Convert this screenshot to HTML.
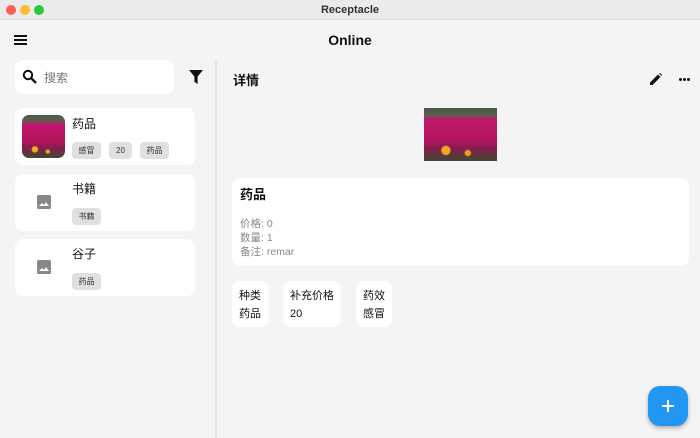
<!DOCTYPE html>
<html><head><meta charset="utf-8"><style>
*{margin:0;padding:0;box-sizing:border-box}
body{width:700px;height:438px;overflow:hidden;background:#f4f4f4;font-family:"Liberation Sans","Noto Sans CJK SC",sans-serif;color:#111;position:relative}
.abs{position:absolute}
.tb{left:0;top:0;width:700px;height:20px;background:#ebebeb;border-bottom:1px solid #dcdcdc;text-align:center;font-size:11px;font-weight:bold;line-height:20px;color:#333}
.dot{top:5px;width:10px;height:10px;border-radius:50%}
.card{background:#fff;border-radius:8px}
.chip{position:absolute;top:34px;height:17px;background:#e0e0e0;border-radius:4px;font-size:8px;line-height:17px;text-align:center;color:#333}
.flower{background:radial-gradient(circle at 30% 80%,#f5a623 0 6%,transparent 8%),radial-gradient(circle at 60% 85%,#e8a020 0 4%,transparent 6%),linear-gradient(180deg,#4a5a4a 0%,#55604a 12%,#c0186e 22%,#b5145f 60%,#8a1a50 75%,#3d4a30 100%)}
</style></head><body>
<div class="abs tb">Receptacle</div>
<div class="abs dot" style="left:6px;background:#fe5f57"></div>
<div class="abs dot" style="left:20px;background:#febc2e"></div>
<div class="abs dot" style="left:34px;background:#28c840"></div>
<div class="abs" style="left:14px;top:35px;width:13px;height:2px;background:#111;box-shadow:0 4px 0 #111,0 8px 0 #111"></div>
<div class="abs" style="left:0;width:700px;top:32px;text-align:center;font-size:14px;font-weight:bold">Online</div>
<div class="abs" style="left:215px;top:60px;width:2px;height:378px;background:#e4e4e4"></div>
<div class="abs card" style="left:15px;top:60px;width:159px;height:34px">
<svg class="abs" style="left:7px;top:9px" width="16" height="16" viewBox="0 0 16 16"><circle cx="6" cy="6" r="4.2" fill="none" stroke="#111" stroke-width="2"/><path d="M9 9l5 5" stroke="#111" stroke-width="2.4"/></svg>
<div class="abs" style="left:29px;top:9px;font-size:12px;color:#777">搜索</div></div>
<svg class="abs" style="left:189px;top:70px" width="14" height="14" viewBox="0 0 13 13"><path d="M0 0h13L8 6v7L5 11V6z" fill="#111"/></svg>
<div class="abs card" style="left:15px;top:108px;width:180px;height:57px">
<div class="abs flower" style="left:7px;top:7px;width:43px;height:43px;border-radius:7px"></div>
<div class="abs" style="left:57px;top:7px;font-size:12px">药品</div>
<div class="chip" style="left:57px;width:29px">感冒</div>
<div class="chip" style="left:94px;width:23px">20</div>
<div class="chip" style="left:125px;width:29px">药品</div></div>
<div class="abs card" style="left:15px;top:174px;width:180px;height:57px">
<svg class="abs" style="left:22px;top:21px" width="14" height="14" viewBox="0 0 14 14"><rect width="14" height="14" rx="1.5" fill="#888"/><path d="M2 11l3-3 2 2 2-3 3 4z" fill="#fff"/></svg>
<div class="abs" style="left:57px;top:6px;font-size:12px">书籍</div>
<div class="chip" style="left:57px;width:29px">书籍</div></div>
<div class="abs card" style="left:15px;top:239px;width:180px;height:57px">
<svg class="abs" style="left:22px;top:21px" width="14" height="14" viewBox="0 0 14 14"><rect width="14" height="14" rx="1.5" fill="#888"/><path d="M2 11l3-3 2 2 2-3 3 4z" fill="#fff"/></svg>
<div class="abs" style="left:57px;top:6px;font-size:12px">谷子</div>
<div class="chip" style="left:57px;width:29px">药品</div></div>
<div class="abs" style="left:233px;top:70px;font-size:13px;font-weight:bold">详情</div>
<svg class="abs" style="left:650px;top:73px" width="12" height="12" viewBox="0 0 12 12"><path d="M0 12V9.5L8 1.5l2.5 2.5L2.5 12z M9 .5l1-0.5 2 2-.5 1z" fill="#111"/></svg>
<div class="abs" style="left:679px;top:78px;width:3px;height:3px;border-radius:50%;background:#111;box-shadow:4px 0 0 #111,8px 0 0 #111"></div>
<div class="abs flower" style="left:424px;top:108px;width:73px;height:53px"></div>
<div class="abs card" style="left:232px;top:178px;width:457px;height:88px">
<div class="abs" style="left:8px;top:6px;font-size:13px;font-weight:bold">药品</div>
<div class="abs" style="left:8px;top:39px;font-size:10.5px;line-height:14px;color:#888">价格: 0<br>数量: 1<br>备注: remar</div></div>
<div class="abs card" style="left:232px;top:281px;width:37px;height:46px"><div class="abs" style="left:7px;top:6px;font-size:11px;line-height:18px">种类<br>药品</div></div>
<div class="abs card" style="left:283px;top:281px;width:58px;height:46px"><div class="abs" style="left:7px;top:6px;font-size:11px;line-height:18px">补充价格<br>20</div></div>
<div class="abs card" style="left:356px;top:281px;width:36px;height:46px"><div class="abs" style="left:7px;top:6px;font-size:11px;line-height:18px">药效<br>感冒</div></div>
<div class="abs" style="left:648px;top:386px;width:40px;height:40px;border-radius:12px;background:#2196f3;box-shadow:0 2px 4px rgba(0,0,0,.3)">
<svg class="abs" style="left:14px;top:14px" width="12" height="12" viewBox="0 0 12 12"><path d="M6 0v12M0 6h12" stroke="#fff" stroke-width="2"/></svg></div>
</body></html>
